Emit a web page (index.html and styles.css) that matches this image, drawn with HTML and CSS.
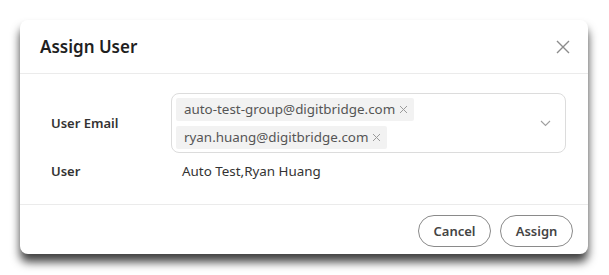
FILE: index.html
```html
<!DOCTYPE html>
<html>
<head>
<meta charset="utf-8">
<link rel="stylesheet" href="styles.css">
</head>
<body>
<div class="modal">
  <div class="modal-header">
    <div class="title">Assign User</div>
    <button class="close" aria-label="Close">
      <svg width="14" height="14" viewBox="0 0 14 14"><path d="M1 1L13 13M13 1L1 13" stroke="#8c8c8c" stroke-width="1.4" fill="none"/></svg>
    </button>
  </div>
  <div class="modal-body">
    <div class="form-row">
      <div class="label">User Email</div>
      <div class="select">
        <div class="tags">
          <span class="tag">auto-test-group@digitbridge.com<svg class="tag-x" width="9" height="9" viewBox="0 0 9 9"><path d="M1 1L8 8M8 1L1 8" stroke="#9a9a9a" stroke-width="1" fill="none"/></svg></span>
          <span class="tag">ryan.huang@digitbridge.com<svg class="tag-x" width="9" height="9" viewBox="0 0 9 9"><path d="M1 1L8 8M8 1L1 8" stroke="#9a9a9a" stroke-width="1" fill="none"/></svg></span>
        </div>
        <svg class="chev" width="11" height="7" viewBox="0 0 11 7"><path d="M1 1L5.5 5.5L10 1" stroke="#a0a0a0" stroke-width="1.1" fill="none"/></svg>
      </div>
    </div>
    <div class="form-row user-row">
      <div class="label">User</div>
      <div class="value">Auto Test,Ryan Huang</div>
    </div>
  </div>
  <div class="modal-footer">
    <button class="btn">Cancel</button>
    <button class="btn">Assign</button>
  </div>
</div>
</body>
</html>
```
FILE: styles.css
```css
* { box-sizing: border-box; }
html, body { margin: 0; background: #fff; }
body {
  padding: 20px;
  font-family: "Noto Sans", "Open Sans", sans-serif;
  color: #333;
}
.modal {
  width: 568px;
  height: 234px;
  background: #fff;
  border-radius: 8px;
  box-shadow: 0 8px 10px rgba(0,0,0,0.75);
  display: flex;
  flex-direction: column;
}
.modal-header {
  height: 54px;
  border-bottom: 1px solid #ebebeb;
  display: flex;
  align-items: center;
  justify-content: space-between;
  padding: 0 18px 0 20px;
}
.title {
  font-size: 17px;
  font-weight: 600;
  color: #1f1f1f;
}
.close {
  border: 0;
  background: none;
  padding: 0;
  width: 14px;
  height: 14px;
  display: flex;
}
.modal-body {
  height: 131px;
  padding: 19px 22px 0 31px;
  border-bottom: 1px solid #ebebeb;
}
.form-row {
  display: grid;
  grid-template-columns: 120px 1fr;
  align-items: center;
}
.label {
  font-size: 13px;
  font-weight: 600;
  color: #333;
}
.select {
  border: 1px solid #dcdcdc;
  border-radius: 8px;
  height: 60px;
  display: flex;
  align-items: center;
  padding: 2px 14px 2px 4px;
}
.tags {
  flex: 1;
  display: flex;
  flex-direction: column;
  align-items: flex-start;
  gap: 5px;
}
.tag {
  background: #f2f2f2;
  height: 23px;
  display: inline-flex;
  align-items: center;
  padding: 0 6px 0 8px;
  font-size: 13.4px;
  color: #555;
  border-radius: 2px;
}
.tag-x {
  margin-left: 4px;
}
.user-row { margin-top: 6px; height: 24px; }
.value {
  font-size: 13.4px;
  color: #333;
  padding-left: 11px;
}
.modal-footer {
  flex: 1;
  display: flex;
  justify-content: flex-end;
  align-items: center;
  gap: 9px;
  padding: 2px 15px 0 0;
}
.btn {
  height: 32px;
  width: 73px;
  border: 1px solid #8a8a8a;
  border-radius: 16px;
  background: #fff;
  font-family: inherit;
  font-size: 13px;
  font-weight: 600;
  color: #444;
  padding: 0;
}
```
